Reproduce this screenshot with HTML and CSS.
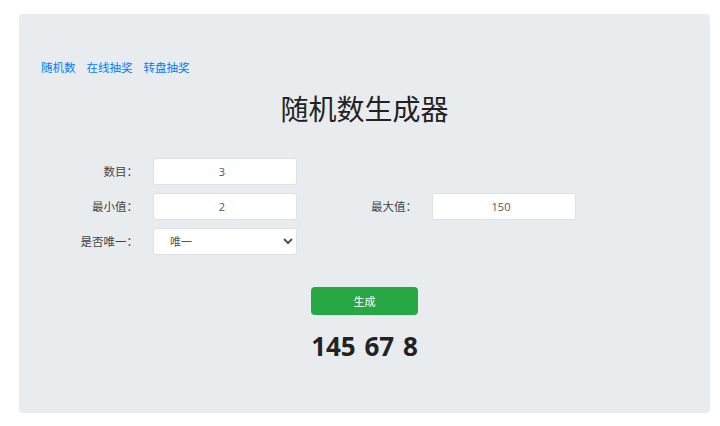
FILE: index.html
```html
<!DOCTYPE html>
<html lang="zh-CN">
<head>
  <meta charset="UTF-8" />
  <meta name="viewport" content="width=device-width, initial-scale=1.0"/>
  <title>随机数生成器</title>
  <link rel="stylesheet" href="styles.css">
</head>
<body>
  <div class="panel">
    <nav class="links">
      <a href="#">随机数</a>
      <a href="#">在线抽奖</a>
      <a href="#">转盘抽奖</a>
    </nav>
    <h1>随机数生成器</h1>
    <form class="gen-form">
      <label class="field-label">数目：</label>
      <input type="text" value="3">
      <span></span><span></span>

      <label class="field-label">最小值：</label>
      <input type="text" value="2">
      <label class="field-label">最大值：</label>
      <input type="text" value="150">

      <label class="field-label">是否唯一：</label>
      <select>
        <option selected>唯一</option>
        <option>不唯一</option>
      </select>
    </form>
    <div class="actions">
      <button type="button">生成</button>
    </div>
    <div class="result">145 67 8</div>
  </div>
</body>
</html>
```

FILE: styles.css
```css
body {
  margin: 0;
  padding: 14px 10px 0 19px;
  background: #fff;
  color: #333;
  font-family: "Open Sans", "Noto Sans CJK SC", sans-serif;
  font-size: 12px;
}

.panel {
  background-color: #e9ecef;
  border-radius: 4px;
  height: 399px;
  padding: 46px 22px 0;
  box-sizing: border-box;
}

.links {
  display: flex;
  gap: 11px;
  font-size: 11.5px;
  line-height: 16px;
}

.links a {
  color: #007bff;
  text-decoration: none;
}

h1 {
  text-align: center;
  font-weight: normal;
  font-size: 28px;
  line-height: 36px;
  margin: 14px 0 0;
  color: #222;
  font-family: "Noto Sans CJK SC", sans-serif;
}

.gen-form {
  display: grid;
  grid-template-columns: 106px 144px 123px 144px;
  column-gap: 6px;
  row-gap: 8px;
  margin-top: 32px;
}

.field-label {
  text-align: right;
  line-height: 27px;
  padding-right: 9px;
  font-size: 11.5px;
  color: #444;
}

input[type="text"],
select {
  height: 27px;
  box-sizing: border-box;
  border: 1px solid #dde1e5;
  border-radius: 3px;
  background: #fff;
  font-family: "Open Sans", "Noto Sans CJK SC", sans-serif;
  font-size: 11px;
  color: #555;
}

input[type="text"] {
  text-align: center;
  padding: 0 12px 0 6px;
}

select {
  padding: 0 12px;
}

.actions {
  display: flex;
  justify-content: center;
  margin-top: 32px;
}

button {
  width: 107px;
  height: 28px;
  background-color: #28a745;
  color: #fff;
  border: none;
  border-radius: 4px;
  font-size: 11px;
  font-family: "Noto Sans CJK SC", sans-serif;
  cursor: pointer;
}

.result {
  text-align: center;
  font-weight: bold;
  font-size: 26px;
  line-height: 36px;
  word-spacing: 2px;
  margin-top: 13px;
  color: #222;
}
```
